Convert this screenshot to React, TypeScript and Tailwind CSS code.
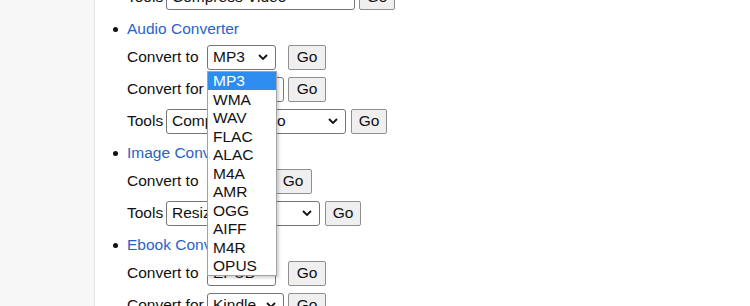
import React from 'react';

type Row = {
  label: string;
  labelWidth: number;
  selectWidth: number;
  value: string;
  gap: number;
  goWidth: number;
  open?: boolean;
};

type Section = {
  title: string | null;
  rows: Row[];
};

const audioFormats = ['MP3', 'WMA', 'WAV', 'FLAC', 'ALAC', 'M4A', 'AMR', 'OGG', 'AIFF', 'M4R', 'OPUS'];

const sections: Section[] = [
  {
    title: null,
    rows: [{ label: 'Tools', labelWidth: 39, selectWidth: 189, value: 'Compress Video', gap: 4, goWidth: 36 }],
  },
  {
    title: 'Audio Converter',
    rows: [
      { label: 'Convert to', labelWidth: 80, selectWidth: 69, value: 'MP3', gap: 12, goWidth: 38, open: true },
      { label: 'Convert for', labelWidth: 80, selectWidth: 77, value: 'iPhone', gap: 4, goWidth: 38 },
      { label: 'Tools', labelWidth: 39, selectWidth: 180, value: 'Compress Audio', gap: 5, goWidth: 36 },
    ],
  },
  {
    title: 'Image Converter',
    rows: [
      { label: 'Convert to', labelWidth: 80, selectWidth: 63, value: 'JPG', gap: 4, goWidth: 38 },
      { label: 'Tools', labelWidth: 39, selectWidth: 154, value: 'Resize Image', gap: 5, goWidth: 36 },
    ],
  },
  {
    title: 'Ebook Converter',
    rows: [
      { label: 'Convert to', labelWidth: 80, selectWidth: 69, value: 'EPUB', gap: 12, goWidth: 38 },
      { label: 'Convert for', labelWidth: 80, selectWidth: 77, value: 'Kindle', gap: 4, goWidth: 38 },
    ],
  },
];

const Chevron = () => (
  <svg width="10" height="6" viewBox="0 0 10 6" className="shrink-0">
    <path d="M1 1l4 4 4-4" fill="none" stroke="#111" strokeWidth="1.8" />
  </svg>
);

const OptionList = () => (
  <div className="absolute left-0 top-[26px] z-10 w-[70px] border border-[#a3a3a3] bg-white shadow-[2px_2px_3px_rgba(0,0,0,0.18)]">
    {audioFormats.map((format, i) => (
      <div
        key={format}
        className={`flex h-[18.5px] items-center pl-[5px] ${i === 0 ? 'bg-[#2d8cf0] text-white' : 'text-[#111]'}`}
      >
        {format}
      </div>
    ))}
  </div>
);

const ControlRow = ({ row }: { row: Row }) => (
  <div className="flex h-[32px] items-center">
    <span className="shrink-0" style={{ width: row.labelWidth }}>
      {row.label}
    </span>
    <div className="relative shrink-0" style={{ width: row.selectWidth }}>
      <div className="flex h-[25px] items-center justify-between overflow-hidden rounded-[3px] border border-[#767676] bg-white pl-[5px] pr-[7px]">
        <span className="truncate">{row.value}</span>
        <Chevron />
      </div>
      {row.open && <OptionList />}
    </div>
    <button
      className="flex h-[25px] shrink-0 items-center justify-center rounded-[2px] border border-[#8f8f8f] bg-[#efefef] text-[#111]"
      style={{ marginLeft: row.gap, width: row.goWidth }}
    >
      Go
    </button>
  </div>
);

export default function App() {
  return (
    <div className="flex h-[306px] w-[750px] overflow-hidden bg-white font-['Liberation_Sans',Arial,sans-serif] text-[15.5px] text-[#111]">
      <aside className="w-[95px] shrink-0 border-r border-[#e6e6e6] bg-[#f7f7f7]" />
      <main className="flex-1">
        <ul className="-mt-[19px] pl-[32px]">
          {sections.map((section, i) => (
            <li key={i}>
              {section.title && (
                <div className="-ml-[14px] mt-[4px] flex h-[24px] items-center">
                  <span className="w-[14px] shrink-0">
                    <span className="block h-[5px] w-[5px] rounded-full bg-[#111]" />
                  </span>
                  <a href="#" className="text-[#2a62c9]">
                    {section.title}
                  </a>
                </div>
              )}
              {section.rows.map((row) => (
                <ControlRow key={row.label + row.value} row={row} />
              ))}
            </li>
          ))}
        </ul>
      </main>
    </div>
  );
}
